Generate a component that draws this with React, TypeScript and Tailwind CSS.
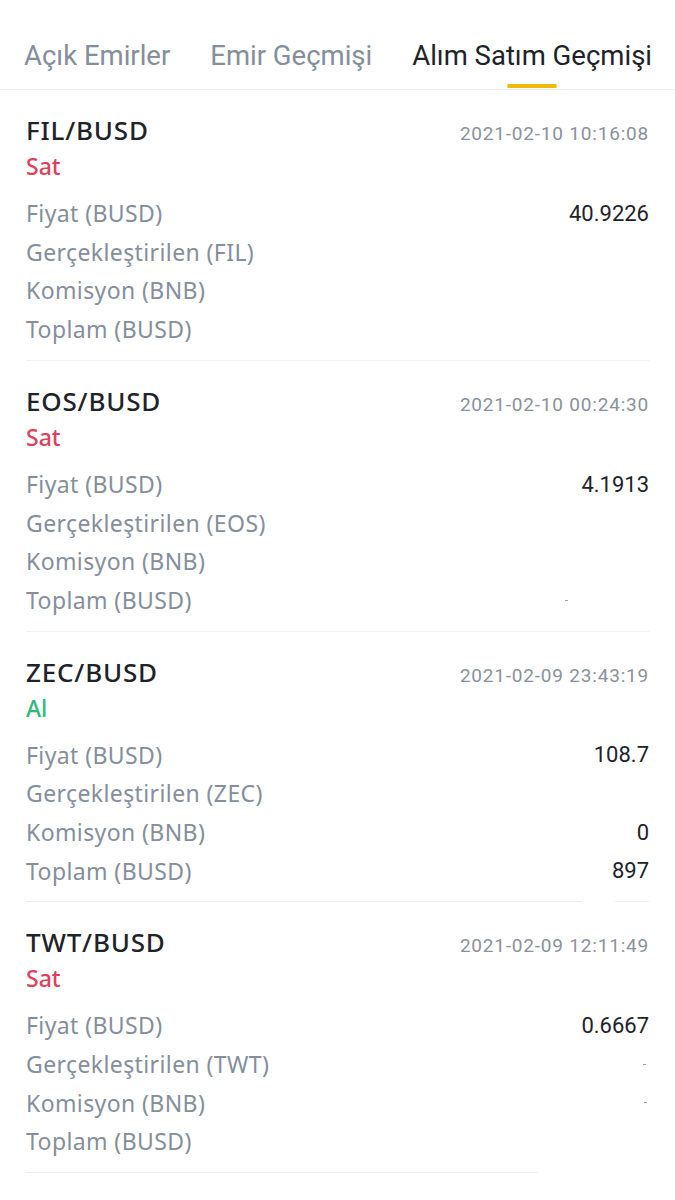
import React from "react";

type Row = { label: string; value?: string; dot?: string };
type Trade = { pair: string; side: "Sat" | "Al"; date: string; rows: Row[]; divider: string };

const trades: Trade[] = [
  {
    pair: "FIL/BUSD",
    side: "Sat",
    date: "2021-02-10 10:16:08",
    rows: [
      { label: "Fiyat (BUSD)", value: "40.9226" },
      { label: "Gerçekleştirilen (FIL)" },
      { label: "Komisyon (BNB)" },
      { label: "Toplam (BUSD)" },
    ],
    divider: "w-full",
  },
  {
    pair: "EOS/BUSD",
    side: "Sat",
    date: "2021-02-10 00:24:30",
    rows: [
      { label: "Fiyat (BUSD)", value: "4.1913" },
      { label: "Gerçekleştirilen (EOS)" },
      { label: "Komisyon (BNB)" },
      { label: "Toplam (BUSD)", dot: "mr-[81px]" },
    ],
    divider: "w-full",
  },
  {
    pair: "ZEC/BUSD",
    side: "Al",
    date: "2021-02-09 23:43:19",
    rows: [
      { label: "Fiyat (BUSD)", value: "108.7" },
      { label: "Gerçekleştirilen (ZEC)" },
      { label: "Komisyon (BNB)", value: "0" },
      { label: "Toplam (BUSD)", value: "897" },
    ],
    divider: "split",
  },
  {
    pair: "TWT/BUSD",
    side: "Sat",
    date: "2021-02-09 12:11:49",
    rows: [
      { label: "Fiyat (BUSD)", value: "0.6667" },
      { label: "Gerçekleştirilen (TWT)", dot: "mr-[3px]" },
      { label: "Komisyon (BNB)", dot: "mr-[2px]" },
      { label: "Toplam (BUSD)" },
    ],
    divider: "w-[512px]",
  },
];

const labelFont = { fontFamily: '"Noto Sans", "Open Sans", sans-serif' };
const numFont = { fontFamily: 'Roboto, "Liberation Sans", sans-serif' };

function Card({ t }: { t: Trade }) {
  return (
    <div className="px-[26px] pt-[22px]">
      <div className="flex items-baseline justify-between h-[36px]">
        <span className="text-[26px] leading-[36px] font-medium tracking-[0.8px] text-[#1e2329]" style={labelFont}>
          {t.pair}
        </span>
        <span className="text-[19px] leading-[36px] tracking-[0.8px] text-[#8a919c]" style={numFont}>
          {t.date}
        </span>
      </div>
      <div
        className={`text-[23px] leading-[36px] font-medium ${t.side === "Al" ? "text-[#2eb87e]" : "text-[#e0405a]"}`}
        style={labelFont}
      >
        {t.side}
      </div>
      <div className="mt-[10px] flex flex-col">
        {t.rows.map((r) => (
          <div key={r.label} className="flex items-center justify-between h-[38.7px]">
            <span className="text-[23px] tracking-[0.4px] text-[#848e9c]" style={labelFont}>
              {r.label}
            </span>
            {r.value ? (
              <span className="text-[22px] text-[#1e2329]" style={numFont}>
                {r.value}
              </span>
            ) : r.dot ? (
              <span className={`w-[3px] h-[1px] bg-[#9aa0a8] ${r.dot}`} />
            ) : null}
          </div>
        ))}
      </div>
      <div className="pt-[11px]">
        {t.divider === "split" ? (
          <div className="flex gap-[33px]">
            <div className="h-px flex-1 bg-[#eeeff1]" />
            <div className="h-px w-[34px] bg-[#eeeff1]" />
          </div>
        ) : (
          <div className={`h-px bg-[#eeeff1] ${t.divider}`} />
        )}
      </div>
    </div>
  );
}

export default function App() {
  return (
    <div className="w-[675px] min-h-[1200px] bg-white overflow-hidden">
      <div className="relative flex items-center h-[90px] pl-[24px] gap-[40px] border-b border-[#eaecef]" style={numFont}>
        <span className="text-[27.5px] text-[#848e9c] pt-[22px]">Açık Emirler</span>
        <span className="text-[27.5px] text-[#848e9c] pt-[22px]">Emir Geçmişi</span>
        <span className="relative text-[27.5px] text-[#1e2329] pt-[22px] h-full flex items-center">
          Alım Satım Geçmişi
          <span className="absolute bottom-[1px] left-1/2 -translate-x-1/2 w-[49px] h-[4px] bg-[#f0b90b]" />
        </span>
      </div>
      {trades.map((t) => (
        <Card key={t.pair} t={t} />
      ))}
    </div>
  );
}
